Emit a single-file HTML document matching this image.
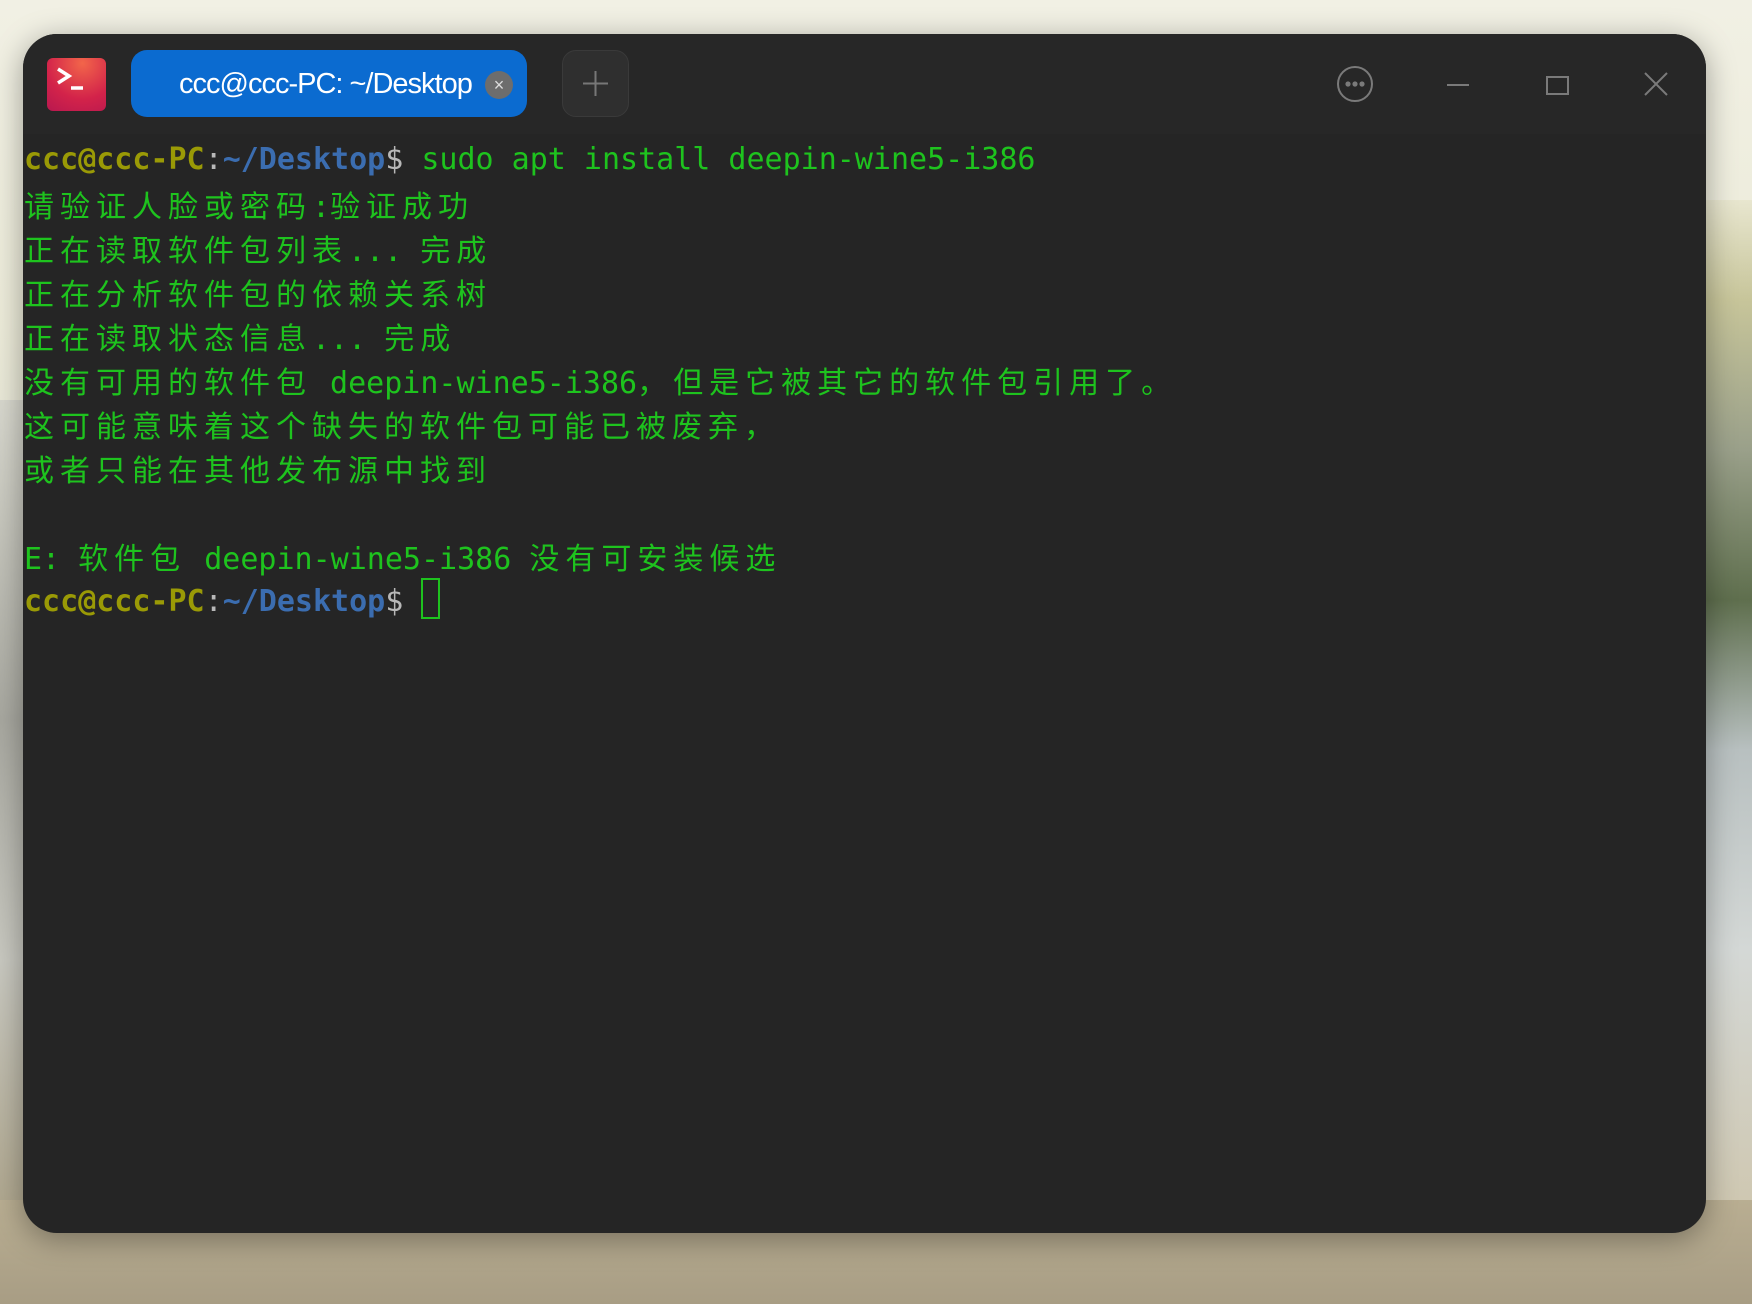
<!DOCTYPE html>
<html><head><meta charset="utf-8"><style>
html,body{margin:0;padding:0}
body{width:1752px;height:1304px;overflow:hidden;position:relative;
background:linear-gradient(180deg,#f1f0e4 0%,#ecebd9 25%,#dcdcd0 50%,#c9c9bf 75%,#b9ae92 92%,#a89d84 100%);}
.bgr{position:absolute;left:1700px;top:200px;width:52px;height:1000px;
background:linear-gradient(180deg,#e8e6cf 0%,#c7c59a 10%,#9aa08a 25%,#5f6f4e 40%,#b8c0c0 55%,#d4d8d6 75%,#cfc8b2 100%)}
.bgl{position:absolute;left:0;top:400px;width:24px;height:800px;
background:linear-gradient(180deg,#d8d8ce,#a8a8a0 40%,#c8c8c0 70%,#b0a890)}
.win{position:absolute;left:23px;top:34px;width:1683px;height:1199px;background:#252525;border-radius:34px;overflow:hidden;
box-shadow:0 6px 30px rgba(0,0,0,.35)}
.title{position:absolute;left:0;top:0;width:100%;height:100px;background:#272727}
.icon{position:absolute;left:24px;top:24px;width:59px;height:53px;border-radius:6px;
background:radial-gradient(circle at 60% 10%,#f2654a,#d3234a 60%,#b8184f)}
.tab{position:absolute;left:108px;top:16px;width:396px;height:67px;border-radius:16px;background:#0b6bd0}
.tab span{position:absolute;left:48px;top:18px;color:#fff;font:29px "Liberation Sans",sans-serif;letter-spacing:-1px}
.tabx{position:absolute;left:462px;top:37px;width:28px;height:28px;border-radius:50%;background:#6d6d6d;color:#ddd;font:18px "Liberation Sans",sans-serif;text-align:center;line-height:28px}
.plus{position:absolute;left:539px;top:16px;width:67px;height:67px;border-radius:14px;background:#2f2f2f;border:1px solid #3a3a3a;box-sizing:border-box}
.term{position:absolute;left:1px;top:104px;font-family:"DejaVu Sans Mono","Liberation Mono","Noto Sans CJK SC",monospace;font-size:30px;color:#1ec31e}
.term div{height:44px;line-height:44px;white-space:pre}
.c{font-family:"Noto Sans CJK SC",sans-serif;letter-spacing:6px}
.u{color:#9a9a06;font-weight:bold}.p{color:#3b6db0;font-weight:bold}.w{color:#b8b8b8}
.cur{display:inline-block;width:15px;height:37px;border:2px solid #1ec31e;vertical-align:-8px}
</style></head><body>
<div class="bgr"></div><div class="bgl"></div>
<div class="win">
<div class="title"></div>
<div class="icon"><svg width="59" height="53"><path d="M11 11 L22 18 L11 25" stroke="#fff" stroke-width="3.5" fill="none"/><path d="M24 30 H36" stroke="#fff" stroke-width="3.5"/></svg></div>
<div class="tab"><span>ccc@ccc-PC: ~/Desktop</span></div>
<div class="tabx">×</div>
<div class="plus"><svg width="65" height="65"><path d="M32.5 20 V45 M20 32.5 H45" stroke="#777" stroke-width="2"/></svg></div>
<svg style="position:absolute;left:0;top:0" width="1683" height="100">
<circle cx="1332" cy="50" r="17" fill="none" stroke="#7a7a7a" stroke-width="2"/>
<circle cx="1325" cy="50" r="2.6" fill="#7a7a7a"/><circle cx="1332" cy="50" r="2.6" fill="#7a7a7a"/><circle cx="1339" cy="50" r="2.6" fill="#7a7a7a"/>
<path d="M1424 51 H1446" stroke="#7a7a7a" stroke-width="2"/>
<rect x="1524" y="43" width="21" height="17" fill="none" stroke="#7a7a7a" stroke-width="2"/>
<path d="M1622 39 L1644 61 M1644 39 L1622 61" stroke="#7a7a7a" stroke-width="2"/>
</svg>
<div class="term"><div><span class="u">ccc@ccc-PC</span><span class="w">:</span><span class="p">~/Desktop</span><span class="w">$</span> sudo apt install deepin-wine5-i386</div><div><span class="c">请验证人脸或密码</span>:<span class="c">验证成功</span></div><div><span class="c">正在读取软件包列表</span>... <span class="c">完成</span></div><div><span class="c">正在分析软件包的依赖关系树</span></div><div><span class="c">正在读取状态信息</span>... <span class="c">完成</span></div><div><span class="c">没有可用的软件包</span> deepin-wine5-i386<span class="c">，但是它被其它的软件包引用了。</span></div><div><span class="c">这可能意味着这个缺失的软件包可能已被废弃，</span></div><div><span class="c">或者只能在其他发布源中找到</span></div><div> </div><div>E: <span class="c">软件包</span> deepin-wine5-i386 <span class="c">没有可安装候选</span></div><div><span class="u">ccc@ccc-PC</span><span class="w">:</span><span class="p">~/Desktop</span><span class="w">$</span> <span class="cur"></span></div></div>
</div>
</body></html>
